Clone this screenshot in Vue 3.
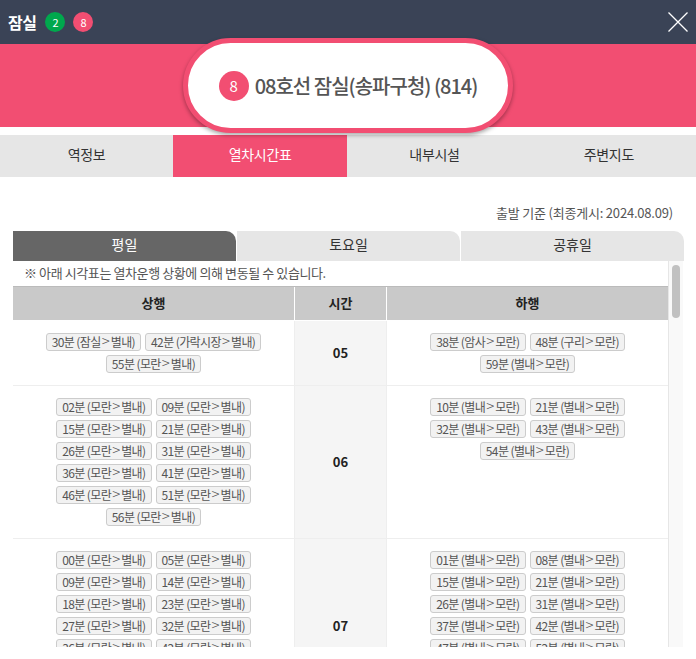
<template>
  <div class="popup">
    <header class="top-bar">
      <h1 class="station">잠실</h1>
      <span class="line-dot line-2">2</span>
      <span class="line-dot line-8">8</span>
      <button class="close-btn" type="button" aria-label="닫기">
        <svg viewBox="0 0 20 20" width="20" height="20" fill="none">
          <path d="M0.5 0.5L19.5 19.5M19.5 0.5L0.5 19.5" stroke="#fff" stroke-width="1.3" />
        </svg>
      </button>
    </header>

    <div class="band">
      <div class="pill">
        <span class="pill-badge">8</span>
        <span class="pill-name">08호선 잠실(송파구청) (814)</span>
      </div>
    </div>

    <nav class="main-tabs">
      <a v-for="tab in mainTabs" :key="tab" class="main-tab" :class="{ active: tab === '열차시간표' }">{{ tab }}</a>
    </nav>

    <section class="content">
      <p class="updated">출발 기준 (최종게시: 2024.08.09)</p>

      <div class="day-tabs">
        <a v-for="day in dayTabs" :key="day" class="day-tab" :class="{ active: day === '평일' }">{{ day }}</a>
      </div>

      <div class="scroll-wrap">
        <div class="scroll-body">
          <p class="notice">※ 아래 시각표는 열차운행 상황에 의해 변동될 수 있습니다.</p>
          <div class="grid grid-head">
            <div class="head-cell">상행</div>
            <div class="head-cell">시간</div>
            <div class="head-cell last">하행</div>
          </div>
          <div v-for="row in rows" :key="row.hour" class="grid grid-row">
            <div class="trains">
              <span v-for="item in row.up" :key="item[0]" class="train">{{ item[0] }}<i class="arrow">&gt;</i>{{ item[1] }}</span>
            </div>
            <div class="hour">{{ row.hour }}</div>
            <div class="trains last">
              <span v-for="item in row.down" :key="item[0]" class="train">{{ item[0] }}<i class="arrow">&gt;</i>{{ item[1] }}</span>
            </div>
          </div>
        </div>
        <div class="scroll-track">
          <div class="scroll-thumb"></div>
        </div>
      </div>
    </section>
  </div>
</template>

<script setup>
const mainTabs = ["역정보", "열차시간표", "내부시설", "주변지도"];
const dayTabs = ["평일", "토요일", "공휴일"];

function times(list, from, to) {
  return list.map((m) => [`${m}분 (${from}`, `${to})`]);
}

const rows = [
  {
    hour: "05",
    up: [
      ["30분 (잠실", "별내)"],
      ["42분 (가락시장", "별내)"],
      ["55분 (모란", "별내)"],
    ],
    down: [
      ["38분 (암사", "모란)"],
      ["48분 (구리", "모란)"],
      ["59분 (별내", "모란)"],
    ],
  },
  {
    hour: "06",
    up: times(["02", "09", "15", "21", "26", "31", "36", "41", "46", "51", "56"], "모란", "별내"),
    down: times(["10", "21", "32", "43", "54"], "별내", "모란"),
  },
  {
    hour: "07",
    up: times(["00", "05", "09", "14", "18", "23", "27", "32", "36", "42", "47", "51", "55", "59"], "모란", "별내"),
    down: times(["01", "08", "15", "21", "26", "31", "37", "42", "47", "52", "57"], "별내", "모란"),
  },
];
</script>

<style>
html,
body {
  margin: 0;
  background: #fff;
}
</style>

<style scoped>
.popup {
  width: 696px;
  font-family: "Noto Sans CJK KR", "Noto Sans", sans-serif;
  color: #333;
}

.top-bar {
  display: flex;
  align-items: center;
  height: 44px;
  padding-left: 8px;
  box-sizing: border-box;
  background: #3a4356;
}

.station {
  margin: 0 9px 0 0;
  font-size: 16px;
  font-weight: 700;
  letter-spacing: -0.5px;
  color: #fff;
}

.line-dot {
  display: flex;
  align-items: center;
  justify-content: center;
  width: 20px;
  height: 20px;
  margin-right: 8px;
  border-radius: 50%;
  font-size: 11px;
  color: #fff;
}

.line-2 {
  background: #00a84d;
}

.line-8 {
  background: #f24e72;
}

.close-btn {
  display: flex;
  margin-left: auto;
  margin-right: 8px;
  padding: 0;
  border: 0;
  background: none;
}

.band {
  display: flex;
  align-items: center;
  justify-content: center;
  height: 83px;
  margin-bottom: 8px;
  background: #f24e72;
}

.pill {
  position: relative;
  z-index: 1;
  display: flex;
  flex: none;
  align-items: center;
  justify-content: center;
  width: 330px;
  height: 95px;
  box-sizing: border-box;
  border: 5px solid #f24e72;
  border-radius: 48px;
  background: #fff;
  box-shadow: 0 2px 4px rgba(0, 0, 0, 0.35);
}

.pill-badge {
  display: flex;
  align-items: center;
  justify-content: center;
  width: 30px;
  height: 30px;
  margin-right: 6px;
  border-radius: 50%;
  background: #f24e72;
  font-size: 15px;
  color: #fff;
}

.pill-name {
  font-size: 20px;
  font-weight: 500;
  letter-spacing: -1px;
  color: #555;
}

.main-tabs {
  display: flex;
  height: 42px;
  background: #e6e6e6;
}

.main-tab {
  flex: 1;
  font-size: 14px;
  line-height: 38px;
  letter-spacing: -0.3px;
  text-align: center;
  color: #333;
}

.main-tab:first-child {
  flex: 0 0 173px;
}

.main-tab.active {
  background: #f24e72;
  color: #fff;
}

.content {
  padding: 0 12px 0 13px;
}

.updated {
  height: 27px;
  margin: 0;
  padding: 27px 11px 0 0;
  font-size: 13px;
  line-height: 17px;
  letter-spacing: -0.2px;
  text-align: right;
  color: #555;
}

.day-tabs {
  display: flex;
  gap: 1px;
  height: 30px;
}

.day-tab {
  flex: 1;
  border-top-right-radius: 10px;
  background: #e6e6e6;
  font-size: 14px;
  line-height: 27px;
  text-align: center;
  color: #333;
}

.day-tab.active {
  background: #666;
  color: #fff;
}

.scroll-wrap {
  display: flex;
  height: 386px;
  overflow: hidden;
}

.scroll-body {
  width: 655px;
  flex: none;
}

.notice {
  height: 25px;
  margin: 0;
  padding-left: 11px;
  font-size: 13px;
  line-height: 23px;
  letter-spacing: -0.4px;
  color: #555;
}

.grid {
  display: grid;
  grid-template-columns: 282px 92px 281px;
}

.grid-head {
  height: 35px;
  box-sizing: border-box;
  border-top: 1px solid #bbb;
  border-bottom: 1px solid #fff;
  background: #c9c9c9;
}

.head-cell {
  border-right: 1px solid #fff;
  font-size: 13px;
  font-weight: 700;
  line-height: 32px;
  text-align: center;
  color: #222;
}

.head-cell.last {
  border-right: 0;
}

.grid-row {
  border-bottom: 1px solid #eee;
}

.trains {
  padding: 12px 20px 8px;
  border-right: 1px solid #eee;
  font-size: 0;
  text-align: center;
}

.trains.last {
  border-right: 0;
}

.train {
  display: inline-block;
  box-sizing: border-box;
  width: auto;
  height: 18px;
  margin: 0 2px 4px;
  padding: 0 5px;
  border: 1px solid #ccc;
  border-radius: 3px;
  background: #f2f2f2;
  font-size: 12px;
  line-height: 16px;
  letter-spacing: -0.6px;
  color: #555;
  vertical-align: top;
}

.arrow {
  margin: 0 1px;
  font-size: 15px;
  font-style: normal;
  font-weight: 300;
  line-height: 14px;
  letter-spacing: 0;
}

.hour {
  display: flex;
  align-items: center;
  justify-content: center;
  padding-bottom: 2px;
  border-right: 1px solid #eee;
  background: #f5f5f5;
  font-size: 13px;
  font-weight: 700;
  color: #222;
}

.scroll-track {
  flex: none;
  width: 8px;
  padding: 4px 3px 0;
  border-left: 1px solid #e6e6e6;
  background: #f9f9f9;
}

.scroll-thumb {
  height: 53px;
  border-radius: 4px;
  background: #c1c1c1;
}
</style>
